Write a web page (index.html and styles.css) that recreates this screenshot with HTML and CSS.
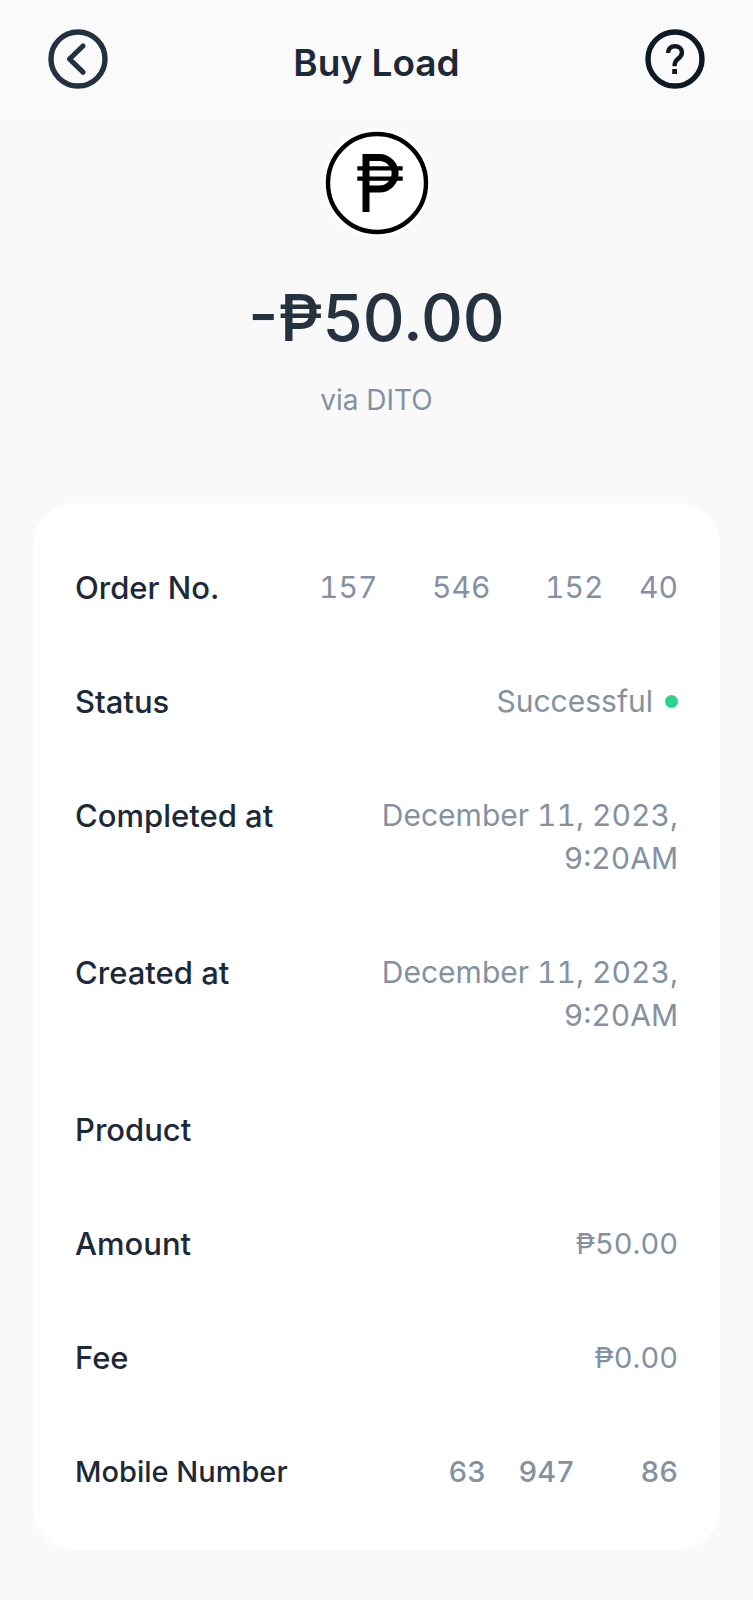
FILE: index.html
```html
<!DOCTYPE html>
<html lang="en">
<head>
<meta charset="utf-8">
<meta name="viewport" content="width=device-width, initial-scale=1">
<title>Buy Load</title>
<link rel="stylesheet" href="styles.css">
</head>
<body>
<header class="topbar">
  <button class="icon-button" type="button" aria-label="Back">
    <svg class="icon" viewBox="0 0 60 60" fill="none" stroke="currentColor">
      <circle cx="30" cy="30" r="27" stroke-width="5.4"/>
      <path d="M35 17 L21.5 30 L35 43.2" stroke-width="5.2" stroke-linecap="round" stroke-linejoin="round"/>
    </svg>
  </button>
  <h1 class="title">Buy Load</h1>
  <button class="icon-button icon-button-dark" type="button" aria-label="Help">
    <svg class="icon" viewBox="0 0 60 60" fill="none" stroke="currentColor">
      <circle cx="30" cy="30" r="27" stroke-width="5.4"/>
      <path d="M23.1 24 C23.1 19.6 25.9 17.2 30 17.2 C34.1 17.2 36.9 19.8 36.9 23.4 C36.9 26 35.6 27.6 33.4 29.5 C30.8 31.8 29.6 33 29.6 37.3" stroke-width="4.4"/>
      <path d="M29.6 40 V45" stroke-width="4.8"/>
    </svg>
  </button>
</header>
<main>
  <section class="summary">
    <svg class="coin" viewBox="0 0 110 110" fill="none" stroke="#000" aria-hidden="true">
      <circle cx="55" cy="55" r="54" fill="#fff" stroke="none"/>
      <circle cx="55" cy="55" r="49" stroke-width="4.4"/>
      <path d="M44 84 V29.6 H57.4 A15.7 15.7 0 0 1 57.4 61 H44" stroke-width="7"/>
      <path d="M35.3 40.3 H80.7 M35.3 50.6 H80.7" stroke-width="4.2"/>
    </svg>
    <p class="total">-₱50.00</p>
    <p class="via">via DITO</p>
  </section>
  <dl class="card">
    <div class="row"><dt>Order No.</dt><dd class="parts order-parts"><span>157</span><span>546</span><span>152</span><span>40</span></dd></div>
    <div class="row"><dt>Status</dt><dd class="status">Successful<span class="dot"></span></dd></div>
    <div class="row"><dt>Completed at</dt><dd>December 11, 2023, 9:20AM</dd></div>
    <div class="row"><dt>Created at</dt><dd>December 11, 2023, 9:20AM</dd></div>
    <div class="row"><dt>Product</dt><dd></dd></div>
    <div class="row"><dt>Amount</dt><dd class="money">₱50.00</dd></div>
    <div class="row"><dt>Fee</dt><dd class="money">₱0.00</dd></div>
    <div class="row row-phone"><dt>Mobile Number</dt><dd class="parts mobile-parts"><span>63</span><span>947</span><span>86</span></dd></div>
  </dl>
</main>
</body>
</html>
```
FILE: styles.css
```css
* {
  box-sizing: border-box;
}

body {
  margin: 0;
  background: #f9f9f9;
  color: #1c2938;
  font-family: Inter, "Noto Sans", sans-serif;
  font-size: 30px;
  line-height: 43px;
}

.topbar {
  display: flex;
  justify-content: space-between;
  align-items: flex-start;
  padding: 29px 48px 21px;
  background: #fafafa;
}

.title {
  margin: 0;
  font-size: 37px;
  font-weight: 600;
  line-height: 68px;
}

.icon-button {
  padding: 0;
  border: 0;
  background: none;
  color: #243140;
  cursor: pointer;
}

.icon-button-dark {
  color: #0f1923;
}

.icon {
  display: block;
  width: 60px;
  height: 60px;
}

.summary {
  display: flex;
  flex-direction: column;
  align-items: center;
  padding: 10px 34px 81px;
}

.coin {
  width: 110px;
  height: 110px;
}

.total {
  margin: 40px 0 21px;
  color: #26323f;
  font-size: 65px;
  font-weight: 500;
  line-height: 80px;
}

.via {
  margin: 0;
  color: #8491a2;
  font-size: 28px;
}

.card {
  display: flex;
  flex-direction: column;
  gap: 71px;
  margin: 0 33px 50px;
  padding: 63px 42px 57px;
  border-radius: 42px;
  background: #fff;
}

.row {
  display: flex;
  justify-content: space-between;
  gap: 40px;
}

.row dt {
  flex-shrink: 0;
  font-size: 31px;
  font-weight: 500;
}

.row dd {
  margin: 0;
  min-height: 43px;
  color: #8491a2;
  font-variant-numeric: tabular-nums;
  text-align: right;
}

.row .money,
.row-phone dt,
.row-phone dd {
  font-size: 29px;
}

.row-phone dd {
  font-weight: 500;
}

.row .status {
  display: flex;
  align-items: center;
  gap: 12px;
}

.dot {
  width: 13px;
  height: 13px;
  border-radius: 50%;
  background: #2ad28c;
}

.row .parts {
  display: grid;
  text-align: left;
}

.order-parts {
  grid-template-columns: 113px 113px 94px auto;
}

.mobile-parts {
  grid-template-columns: 70px 122px auto;
}
```
